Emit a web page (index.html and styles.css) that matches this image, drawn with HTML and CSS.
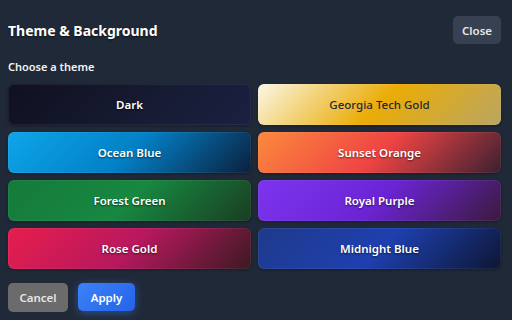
FILE: index.html
```html
<!DOCTYPE html>
<html>
<head>
<meta charset="utf-8">
<link rel="stylesheet" href="styles.css">
</head>
<body>
<div class="panel">
  <div class="header">
    <h1 class="title">Theme &amp; Background</h1>
    <button class="btn btn-close">Close</button>
  </div>
  <div class="label">Choose a theme</div>
  <div class="grid">
    <div class="card t-dark">Dark</div>
    <div class="card t-gold">Georgia Tech Gold</div>
    <div class="card t-ocean">Ocean Blue</div>
    <div class="card t-sunset">Sunset Orange</div>
    <div class="card t-forest">Forest Green</div>
    <div class="card t-purple">Royal Purple</div>
    <div class="card t-rose">Rose Gold</div>
    <div class="card t-midnight">Midnight Blue</div>
  </div>
  <div class="footer">
    <button class="btn btn-cancel">Cancel</button>
    <button class="btn btn-apply">Apply</button>
  </div>
</div>
</body>
</html>
```
FILE: styles.css
```css
html, body {
  margin: 0;
  padding: 0;
  background: #202937;
  height: 100%;
}
body {
  font-family: "Noto Sans", "Open Sans", sans-serif;
  color: #f3f4f6;
}
.panel {
  padding: 16px 11px 0 8px;
}
.header {
  display: flex;
  justify-content: space-between;
  align-items: center;
  height: 28px;
}
.title {
  margin: 0;
  font-size: 14px;
  font-weight: 700;
  color: #ffffff;
  text-shadow: 0 1px 2px rgba(0,0,0,0.6);
}
.btn {
  font-family: inherit;
  border: none;
  border-radius: 5px;
  font-size: 11.5px;
  font-weight: 600;
  color: #ffffff;
  padding: 0;
  height: 28px;
  cursor: pointer;
}
.btn-close {
  width: 48px;
  background: #374151;
  color: #e5e7eb;
}
.label {
  margin-top: 15px;
  font-size: 11px;
  font-weight: 600;
  line-height: 16px;
  color: #f3f4f6;
}
.grid {
  margin-top: 9px;
  display: grid;
  grid-template-columns: 1fr 1fr;
  grid-auto-rows: 41px;
  column-gap: 7px;
  row-gap: 7px;
}
.card {
  display: flex;
  align-items: center;
  justify-content: center;
  border-radius: 6px;
  font-size: 11.5px;
  font-weight: 600;
  color: #ffffff;
  text-shadow: 0 1px 2px rgba(0,0,0,0.6);
  border: 1px solid rgba(255,255,255,0.06);
  background-origin: border-box;
  box-shadow: 0 1px 3px rgba(0,0,0,0.3);
}
.t-dark { background-image: linear-gradient(135deg, #10101f 0%, #161a30 50%, #1b2042 100%); }
.t-gold { background-image: linear-gradient(135deg, #fbf7e6 0%, #eaac06 50%, #b9a664 100%); color: #1f2937; text-shadow: none; font-weight: 500; }
.t-ocean { background-image: linear-gradient(135deg, #0ea5e9 0%, #0380c6 50%, #0b1f3d 100%); }
.t-sunset { background-image: linear-gradient(135deg, #fb8a3c 0%, #ef4444 50%, #3a2030 100%); }
.t-forest { background-image: linear-gradient(135deg, #157a3a 0%, #178841 50%, #1a3d22 100%); }
.t-purple { background-image: linear-gradient(135deg, #7c35ee 0%, #6b24d4 50%, #3a1a3c 100%); }
.t-rose { background-image: linear-gradient(135deg, #e61e4d 0%, #b8185e 50%, #3b1a22 100%); }
.t-midnight { background-image: linear-gradient(135deg, #1e3a8a 0%, #1e40af 50%, #0d1633 100%); }
.footer {
  margin-top: 14px;
  display: flex;
  gap: 10px;
}
.btn-cancel {
  width: 60px;
  height: 29px;
  background: #6b6b6b;
  color: #e5e5e5;
}
.btn-apply {
  width: 57px;
  height: 28px;
  background: linear-gradient(135deg, #3b82f6, #2563eb);
  box-shadow: 0 2px 10px rgba(59,130,246,0.45);
}
```
